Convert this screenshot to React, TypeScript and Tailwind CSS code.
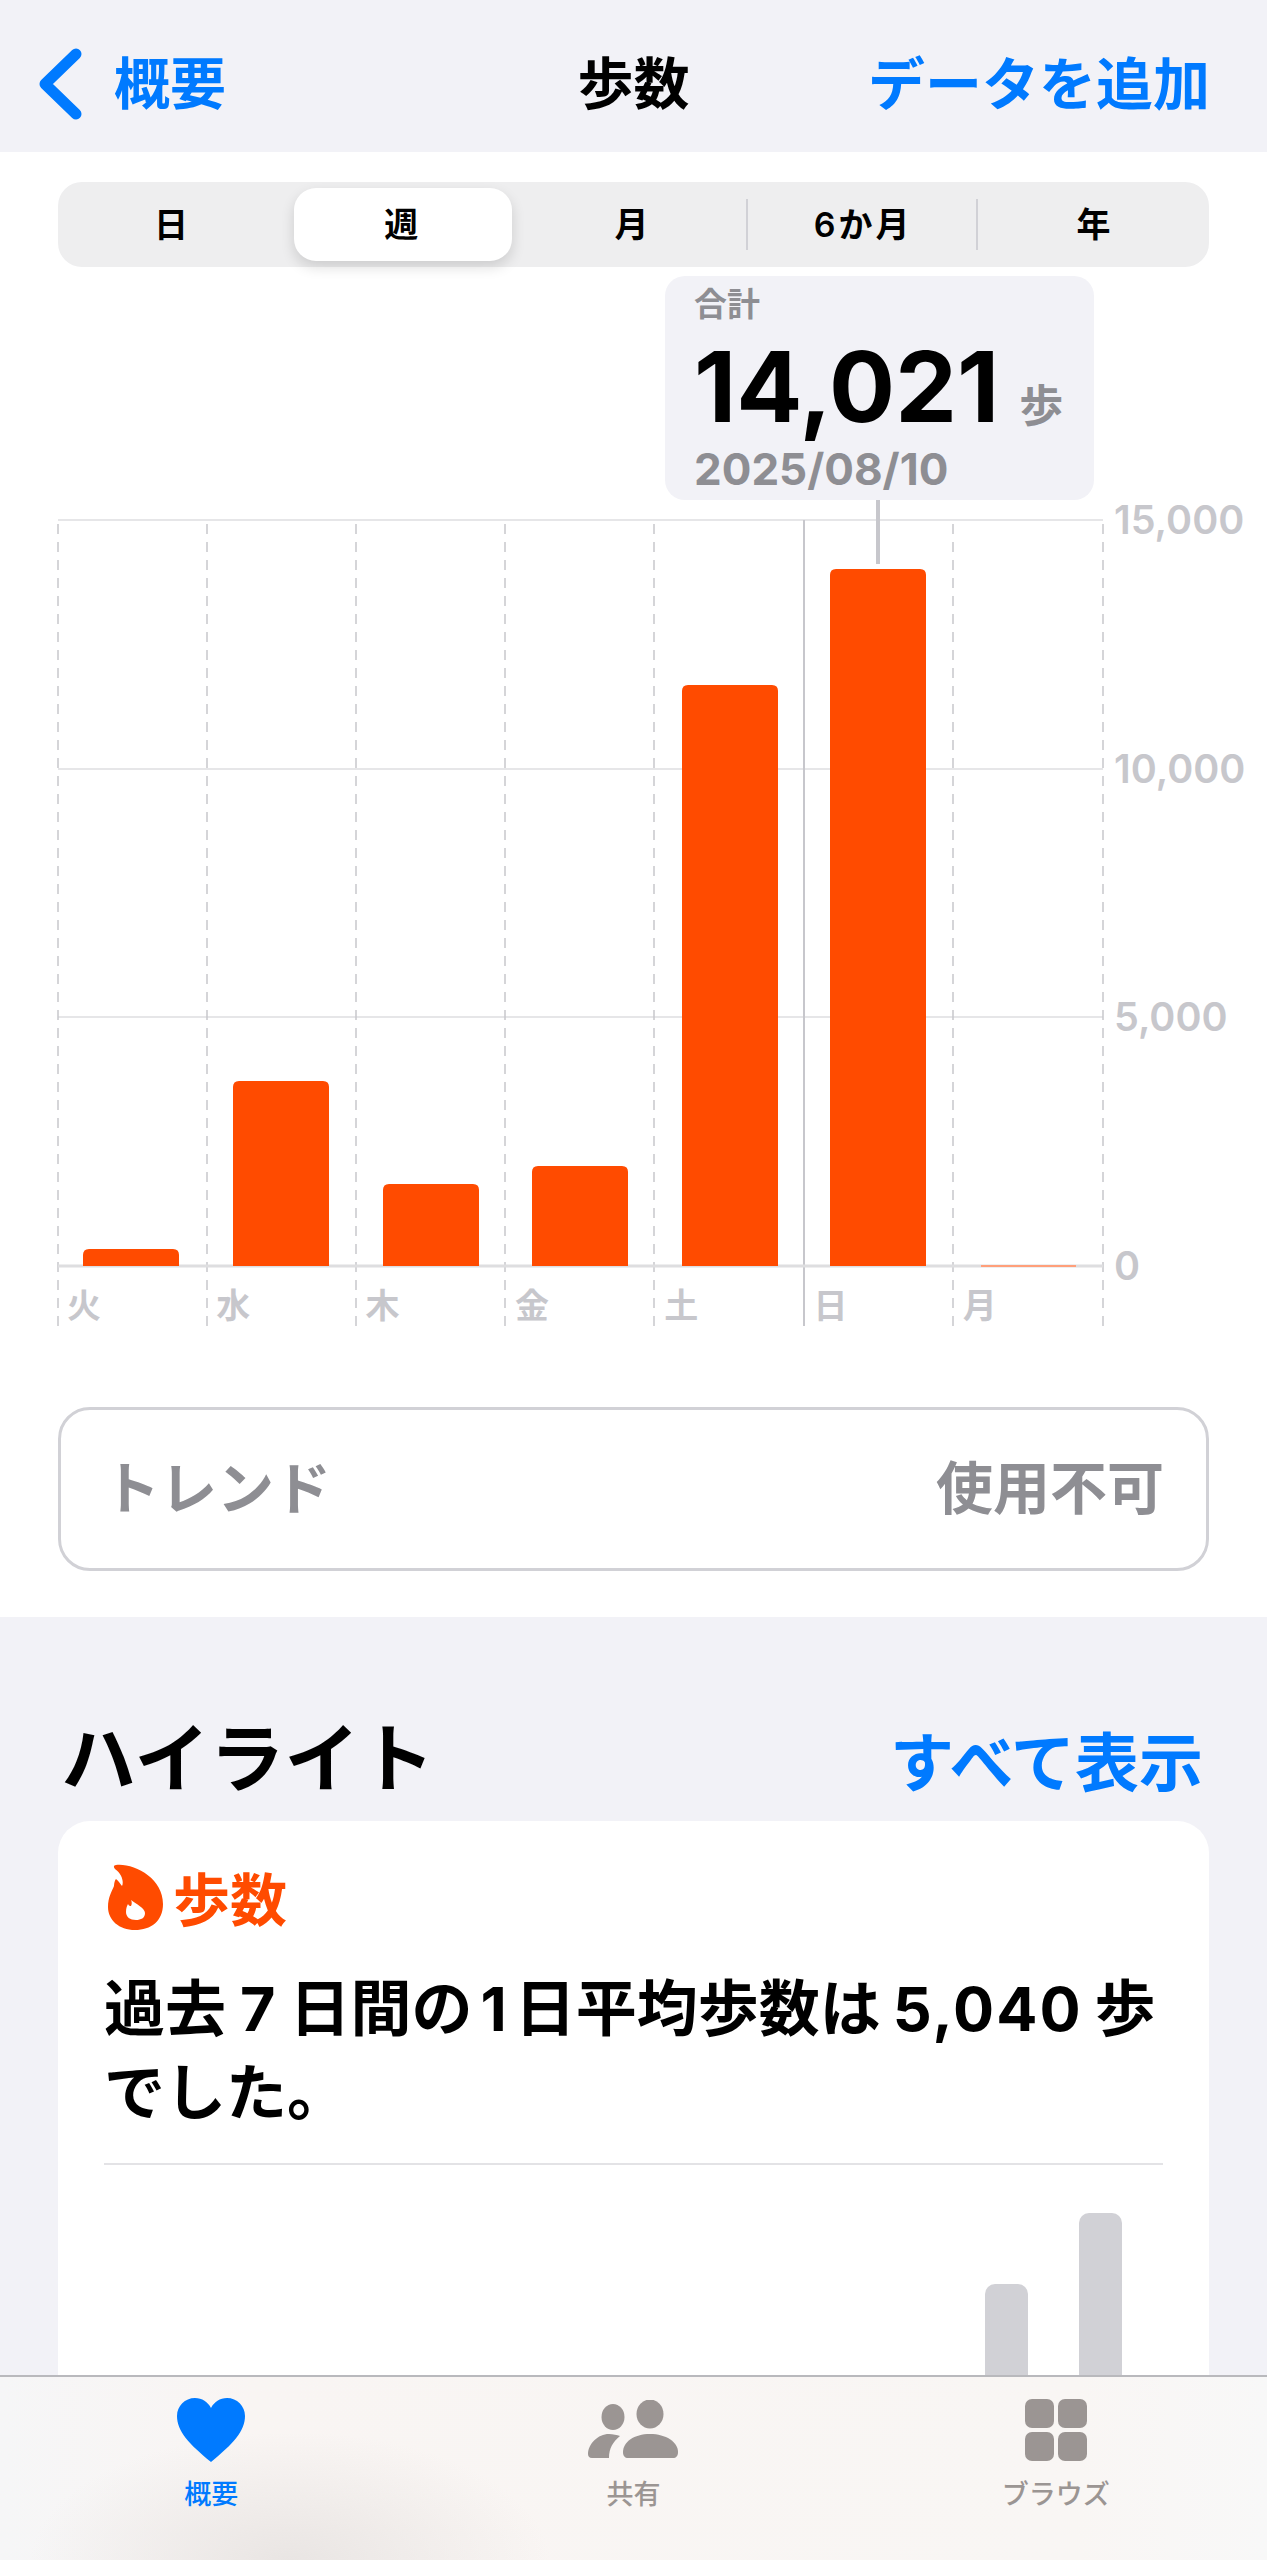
import type { ReactNode } from "react";

const gridX = [58, 207, 356, 505, 654, 953, 1103];
const gridY = [520, 769, 1017];
const bars = [
  { x: 83, top: 1249 },
  { x: 233, top: 1081 },
  { x: 383, top: 1184 },
  { x: 532, top: 1166 },
  { x: 682, top: 685 },
  { x: 830, top: 569 },
];
const days = ["火", "水", "木", "金", "土", "日", "月"];
const yLabels = [
  { y: 520, label: "15,000" },
  { y: 769, label: "10,000" },
  { y: 1017, label: "5,000" },
  { y: 1266, label: "0" },
];

function Chart() {
  return (
    <svg viewBox="0 500 1267 830" className="block h-[830px] w-[1267px]">
      {gridY.map((y) => (
        <line key={y} x1="58" x2="1103" y1={y} y2={y} stroke="#e6e6e8" strokeWidth="2" />
      ))}
      {gridX.map((x) => (
        <line key={x} x1={x} x2={x} y1="1326" y2="520" stroke="#c7c7cc" strokeWidth="1.5" strokeDasharray="10 8" />
      ))}
      <line x1="804" x2="804" y1="520" y2="1326" stroke="#c7c7cc" strokeWidth="2" />
      <line x1="58" x2="1103" y1="1266" y2="1266" stroke="#dedee0" strokeWidth="3" />
      <rect x="876" y="500" width="4" height="64" fill="#c7c7cc" />

      {bars.map((b) => (
        <path
          key={b.x}
          d={`M${b.x} 1266V${b.top + 6}q0 -6 6 -6H${b.x + 90}q6 0 6 6V1266Z`}
          fill="#ff4b00"
        />
      ))}
      <rect x="981" y="1265" width="95" height="2" fill="#ff9f7a" />

      {days.map((d, i) => (
        <text key={d} x={67 + i * 149.3} y="1318" fontSize="34" fontWeight="600" fill="#c7c7cc">
          {d}
        </text>
      ))}
      {yLabels.map((t) => (
        <text key={t.y} x="1114" y={t.y + 14} fontSize="39.5" fontWeight="600" fill="#c7c7cc">
          {t.label}
        </text>
      ))}
    </svg>
  );
}

function TabItem({ icon, label, active }: { icon: ReactNode; label: string; active?: boolean }) {
  return (
    <div className="flex flex-col items-center">
      <div className="flex h-[66px] items-center justify-center">{icon}</div>
      <span className={`mt-[17px] text-[27px] leading-[30px] font-medium ${active ? "text-[#007aff]" : "text-[#9b9593]"}`}>
        {label}
      </span>
    </div>
  );
}

export default function App() {
  return (
    <div className="flex h-[2560px] w-[1267px] flex-col overflow-hidden bg-[#f2f2f7] font-['Inter','Noto_Sans_CJK_JP',sans-serif] text-black">
      {/* Nav bar */}
      <header className="grid h-[152px] grid-cols-[1fr_auto_1fr] items-center px-[60px] pt-[16px]">
        <div className="-ml-[23px] flex items-center gap-[31px] text-[#007aff]">
          <svg viewBox="0 0 46 72" className="h-[72px] w-[46px] shrink-0">
            <path d="M39 6L8 36L39 66" fill="none" stroke="#007aff" strokeWidth="11" strokeLinecap="round" strokeLinejoin="round" />
          </svg>
          <span className="text-[56px] leading-none font-semibold">概要</span>
        </div>
        <h1 className="text-[56px] leading-none font-bold">歩数</h1>
        <div className="-mr-[3px] text-right text-[57px] leading-none font-semibold text-[#007aff]">データを追加</div>
      </header>

      <main className="min-h-0 flex-1 overflow-hidden">
        <section className="bg-white px-[58px] pt-[30px] pb-[46px]">
          {/* Segmented control */}
          <div className="grid h-[85px] grid-cols-5 items-center rounded-[24px] bg-[#eeeeef] text-[34px] font-semibold">
            <div className="pr-[4px] text-center">日</div>
            <div className="mx-[6px] flex h-[73px] items-center justify-center rounded-[22px] bg-white pr-[4px] shadow-[0_6px_14px_rgba(0,0,0,0.14)]">
              週
            </div>
            <div className="pr-[4px] text-center">月</div>
            <div className="-ml-[3px] border-l-2 border-[#d1d1d6] text-center tracking-[3px]">6か月</div>
            <div className="-ml-[3px] border-l-2 border-[#d1d1d6] text-center">年</div>
          </div>

          {/* Callout */}
          <div className="mt-[9px] ml-[607px] h-[224px] w-[429px] rounded-[20px] bg-[#f2f2f7] px-[29px] pt-[4px]">
            <div className="text-[33px] leading-[48px] font-semibold text-[#8e8e93]">合計</div>
            <div className="mt-[4px] flex items-baseline">
              <span className="text-[98px] leading-[110px] font-bold">14,021</span>
              <span className="ml-[20px] text-[44px] font-semibold text-[#8e8e93]">歩</span>
            </div>
            <div className="text-[44px] leading-[54px] font-bold text-[#8e8e93]">2025/08/10</div>
          </div>

          <div className="-mx-[58px]">
            <Chart />
          </div>

          {/* Trend */}
          <div className="mt-[77px] flex h-[164px] items-center justify-between rounded-[32px] border-[3px] border-[#d1d1d6] pr-[42px] pl-[42px] text-[57px] font-semibold text-[#8e8e93]">
            <span>トレンド</span>
            <span>使用不可</span>
          </div>
        </section>

        {/* Highlights */}
        <section className="px-[58px]">
          <div className="flex h-[204px] items-end justify-between pb-[20px]">
            <h2 className="ml-[3px] text-[75px] leading-[84px] font-bold">ハイライト</h2>
            <span className="mr-[6px] mb-[2px] text-[64px] leading-[72px] font-semibold text-[#007aff]">すべて表示</span>
          </div>
          <div className="h-[700px] rounded-[32px] bg-white px-[46px] pt-[43px]">
            <div className="flex items-center gap-[10px]">
              <svg viewBox="0 0 55 67" className="ml-[4px] h-[67px] w-[55px] shrink-0">
                <path
                  d="M8 1C26 -1 55 14 55 40C55 57 43 66 27 66C11 66 0 56 0 43C0 33 4 27 6 22C6 19 7 16 8 15C11 17 12 20 14 22C16 18 14 10 7 5C5 3 6 1 8 1Z"
                  fill="#ff4b00"
                />
                <path
                  d="M23 36C28 40 37 44 37 49C37 54 33 56 28 56C22 56 18 53 18 48C18 44 19 42 20 40C21 42 22 42 23 42C24 40 24 38 23 36Z"
                  fill="#fff"
                />
              </svg>
              <span className="mt-[6px] text-[57px] leading-none font-bold text-[#ff4b00]">歩数</span>
            </div>
            <p className="mt-[36px] text-[61px] leading-[84px] font-bold whitespace-nowrap">
              過去<span className="mx-[14px]">7</span>日間の<span className="mx-[8px]">1</span>日平均歩数は
              <span className="mx-[12px] tracking-[2px]">5,040</span>歩
              <br />
              でした。
            </p>
            <div className="mt-[28px] h-[2px] bg-[#e3e3e6]" />
            <div className="mt-[48px] flex h-[400px] items-start justify-end gap-[51px] pr-[41px]">
              <div className="mt-[71px] h-[329px] w-[43px] rounded-t-[10px] bg-[#d1d1d6]" />
              <div className="h-[400px] w-[43px] rounded-t-[10px] bg-[#d1d1d6]" />
            </div>
          </div>
        </section>
      </main>

      {/* Tab bar */}
      <nav className="grid h-[185px] shrink-0 grid-cols-3 border-t-2 border-[#b9b9bd] bg-[radial-gradient(ellipse_260px_130px_at_290px_185px,#e9e5e3,transparent),linear-gradient(90deg,#f6f6f7,#f9f5f3_20%,#f9f6f4_85%,#f8f8f8)] pt-[20px]">
        <TabItem
          active
          label="概要"
          icon={
            <svg viewBox="0 0 68 64" className="h-[64px] w-[68px]">
              <path
                d="M34 64C12 46 0 33 0 18C0 8 8 0 18 0C25 0 31 4 34 10C37 4 43 0 50 0C60 0 68 8 68 18C68 33 56 46 34 64Z"
                fill="#007aff"
              />
            </svg>
          }
        />
        <TabItem
          label="共有"
          icon={
            <svg viewBox="0 0 90 60" className="h-[60px] w-[90px]" fill="#9b9593">
              <ellipse cx="25" cy="17" rx="11.5" ry="13" />
              <ellipse cx="62" cy="14" rx="13.5" ry="14.5" />
              <path d="M0 54C0 44 10 34 21 34C25 34 29 35 32 36C25 42 21 48 21 58H4C1 58 0 56 0 54Z" />
              <path d="M35 52C35 42 46 34 62 34C78 34 90 42 90 52C90 56 88 58 85 58H40C37 58 35 56 35 52Z" />
            </svg>
          }
        />
        <TabItem
          label="ブラウズ"
          icon={
            <svg viewBox="0 0 62 62" className="h-[62px] w-[62px]" fill="#9b9593">
              <rect x="0" y="0" width="29" height="29" rx="7" />
              <rect x="33" y="0" width="29" height="29" rx="7" />
              <rect x="0" y="33" width="29" height="29" rx="7" />
              <rect x="33" y="33" width="29" height="29" rx="7" />
            </svg>
          }
        />
      </nav>
    </div>
  );
}
